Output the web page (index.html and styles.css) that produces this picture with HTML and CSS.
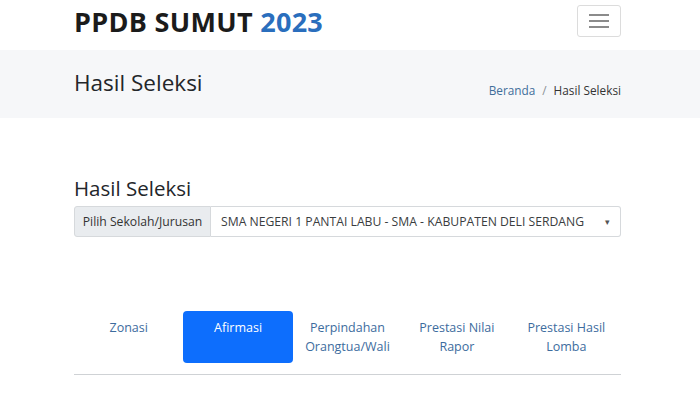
FILE: index.html
```html
<!DOCTYPE html>
<html lang="id">
<head>
<meta charset="utf-8">
<title>PPDB SUMUT 2023 - Hasil Seleksi</title>
<link rel="stylesheet" href="styles.css">
</head>
<body>
<header class="navbar">
  <div class="container nav-inner">
    <a class="brand" href="#">PPDB SUMUT <span class="year">2023</span></a>
    <button class="toggler" type="button" aria-label="Menu">
      <svg width="20" height="14" viewBox="0 0 20 14"><path d="M0 1h20M0 7h20M0 13h20" stroke="#666" stroke-width="1.6"/></svg>
    </button>
  </div>
</header>
<section class="page-head">
  <div class="container head-inner">
    <h1 class="page-title">Hasil Seleksi</h1>
    <nav class="breadcrumb">
      <a href="#">Beranda</a><span class="sep">/</span><span class="current">Hasil Seleksi</span>
    </nav>
  </div>
</section>
<main class="container content">
  <h2 class="section-title">Hasil Seleksi</h2>
  <div class="input-group">
    <span class="ig-label">Pilih Sekolah/Jurusan</span>
    <div class="select">
      <span>SMA NEGERI 1 PANTAI LABU - SMA - KABUPATEN DELI SERDANG</span>
      <span class="caret">▾</span>
    </div>
  </div>
  <nav class="tabs">
    <a class="tab" href="#">Zonasi</a>
    <a class="tab active" href="#">Afirmasi</a>
    <a class="tab" href="#">Perpindahan Orangtua/Wali</a>
    <a class="tab" href="#">Prestasi Nilai Rapor</a>
    <a class="tab" href="#">Prestasi Hasil Lomba</a>
  </nav>
</main>
</body>
</html>
```
FILE: styles.css
```css
* { box-sizing: border-box; }
body {
  margin: 0;
  font-family: "Open Sans", "Noto Sans", sans-serif;
  color: #212529;
  background: #fff;
}
a { text-decoration: none; }
.container {
  width: 547px;
  margin-left: 74px;
}
.navbar { height: 50px; }
.nav-inner {
  display: flex;
  justify-content: space-between;
  align-items: center;
  height: 42px;
}
.brand {
  font-weight: 700;
  font-size: 27px;
  color: #1b1b1b;
  letter-spacing: 0.3px;
}
.year { color: #2a6ebd; }
.toggler {
  width: 44px;
  height: 32px;
  border: 1px solid #dcdcdc;
  border-radius: 3px;
  background: #fff;
  display: flex;
  align-items: center;
  justify-content: center;
  padding: 0;
}
.page-head {
  background: #f6f7f9;
  height: 68px;
}
.head-inner {
  display: flex;
  justify-content: space-between;
  align-items: center;
  height: 68px;
}
.page-title {
  margin: 0 0 4px;
  font-size: 22.5px;
  font-weight: 500;
  color: #23262a;
}
.breadcrumb {
  font-size: 11.8px;
  margin-top: 12px;
  color: #333;
}
.breadcrumb a { color: #3f6e9a; }
.breadcrumb .sep { color: #8a8f94; margin: 0 7px; }
.content { padding-top: 58px; }
.section-title {
  margin: 0 0 5px;
  font-size: 20.5px;
  font-weight: 500;
  color: #23262a;
  line-height: 25px;
}
.input-group {
  display: flex;
  height: 31px;
  font-size: 12.2px;
}
.ig-label {
  width: 137px;
  background: #e9ecef;
  border: 1px solid #d6d9dc;
  border-radius: 3px 0 0 3px;
  display: flex;
  align-items: center;
  justify-content: center;
  color: #333;
}
.select {
  flex: 1;
  border: 1px solid #d6d9dc;
  border-left: none;
  border-radius: 0 3px 3px 0;
  display: flex;
  align-items: center;
  justify-content: space-between;
  padding: 0 10px;
  color: #3a3d40;
}
.caret { font-size: 9px; color: #555; }
.tabs {
  display: grid;
  grid-template-columns: repeat(5, 1fr);
  margin-top: 74px;
  padding-bottom: 11px;
  border-bottom: 1px solid #cfd2d5;
}
.tab {
  text-align: center;
  font-size: 12.5px;
  line-height: 19px;
  color: #3d6c9e;
  padding: 7px 12px 6px;
  height: 52px;
  border-radius: 4px;
}
.tab.active {
  background: #0d6efd;
  color: #fff;
}
```
